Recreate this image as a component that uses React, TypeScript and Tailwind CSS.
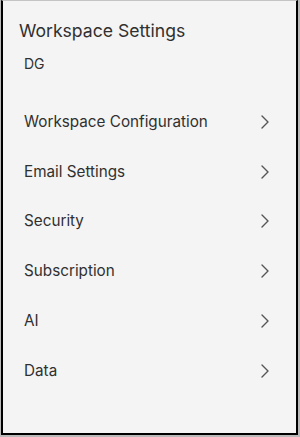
import { ChevronRight } from 'lucide-react';

const items = [
  'Workspace Configuration',
  'Email Settings',
  'Security',
  'Subscription',
  'AI',
  'Data',
];

export default function App() {
  return (
    <div className="h-[437px] w-[300px] bg-[#b9b9b9] pl-[1px] pr-[2px] pb-[2px]">
      <div
        className="h-full border-x-2 border-b-2 border-t border-black border-t-[#c4c4c4] bg-[#f4f4f4] text-[#303030]"
        style={{ fontFamily: 'Inter, "Noto Sans", sans-serif' }}
      >
        <div className="pl-[16px] pt-[18px]">
          <h1 className="text-[17.6px] leading-[24px] font-normal">Workspace Settings</h1>
          <div className="mt-[11px] pl-[5px] text-[14px] leading-[20px]">DG</div>
        </div>
        <ul className="mt-[23px]">
          {items.map((label) => (
            <li
              key={label}
              className="flex h-[49.8px] cursor-pointer items-center justify-between pl-[21px] pr-[19px]"
            >
              <span className="text-[15.25px] leading-[20px]">{label}</span>
              <ChevronRight size={24} strokeWidth={1.4} className="text-[#555555]" />
            </li>
          ))}
        </ul>
      </div>
    </div>
  );
}
